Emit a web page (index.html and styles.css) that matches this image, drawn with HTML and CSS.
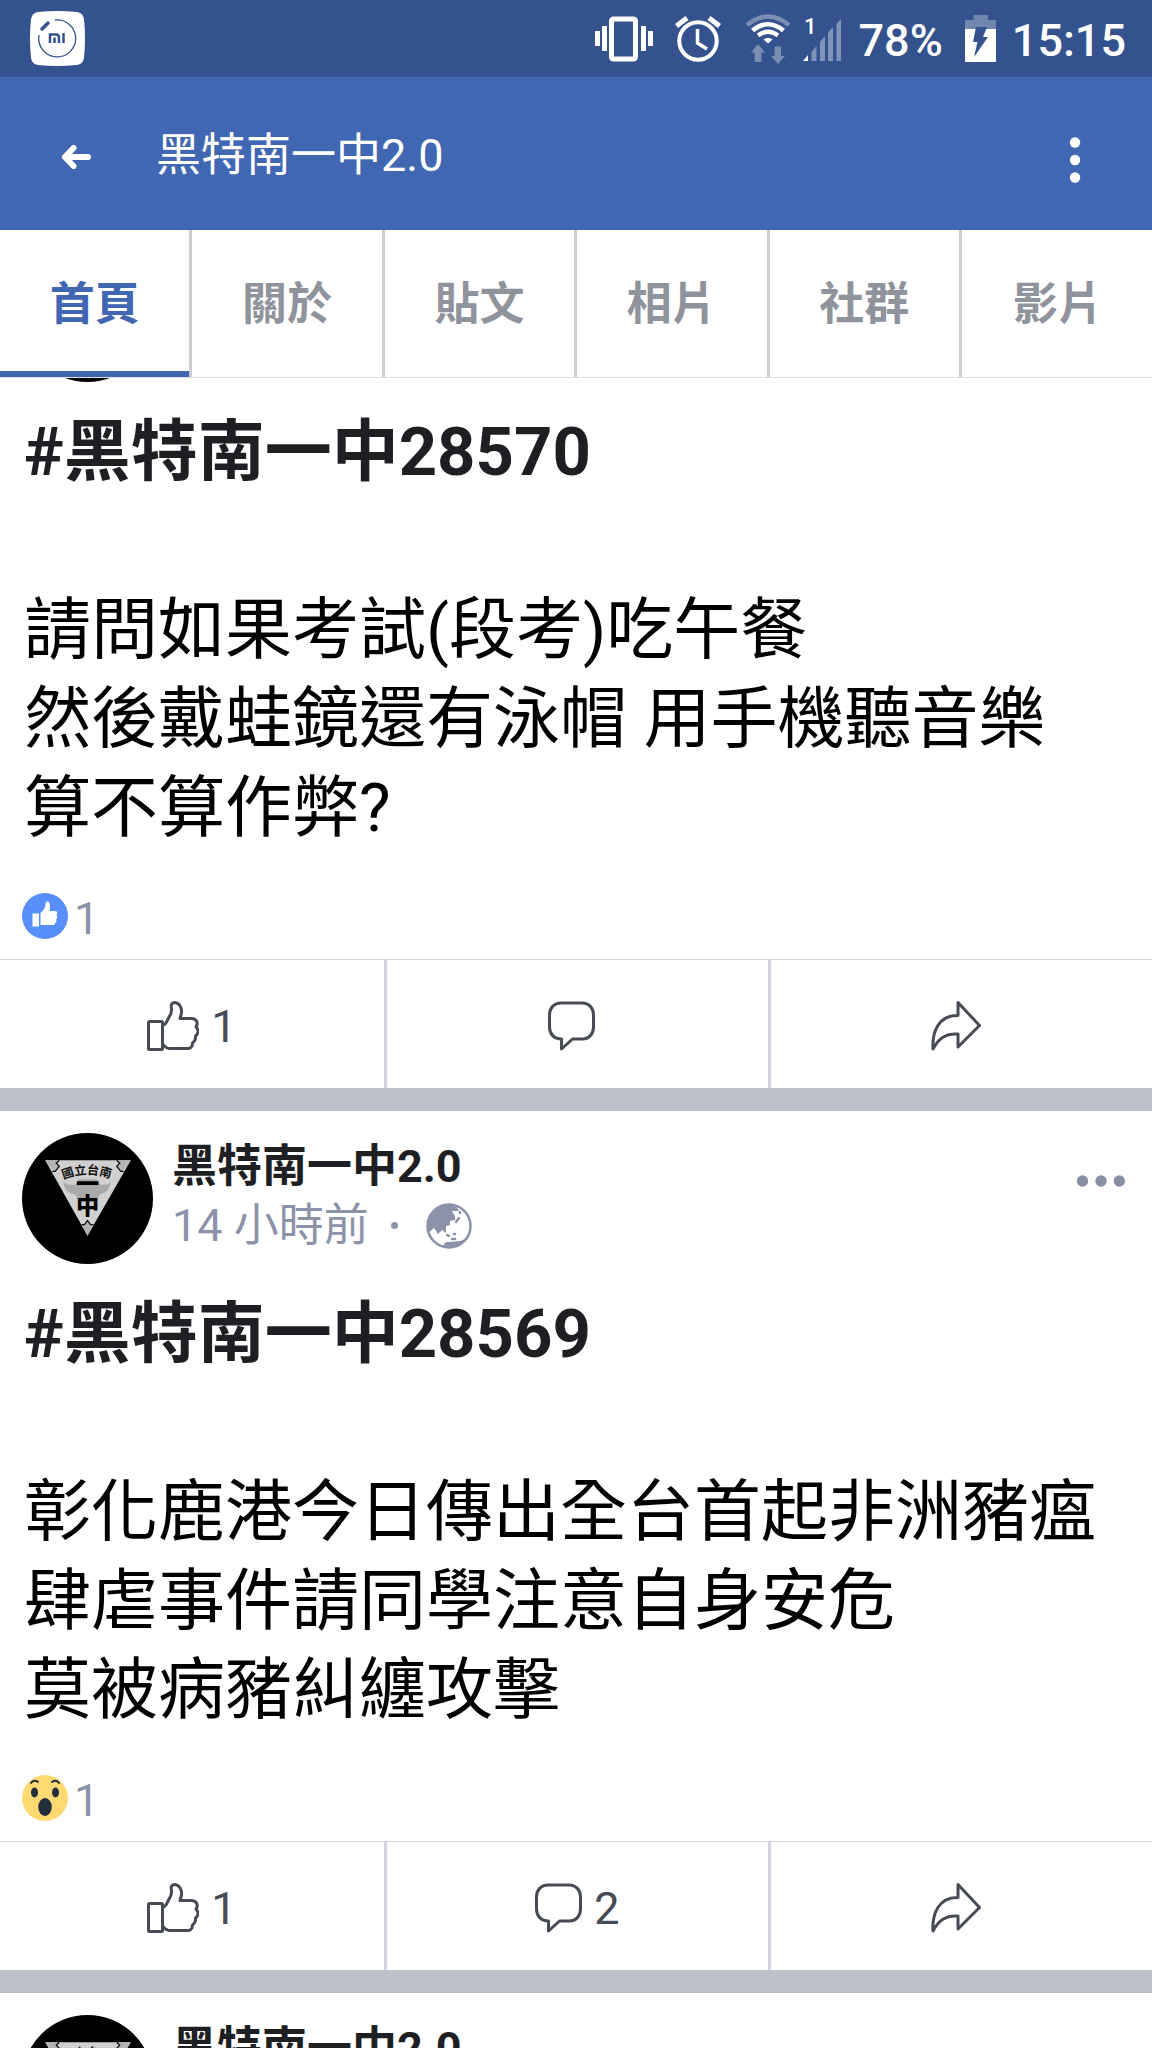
FILE: index.html
```html
<!DOCTYPE html>
<html lang="zh-Hant">
<head>
<meta charset="utf-8">
<meta name="viewport" content="width=device-width, initial-scale=1">
<title>黑特南一中2.0</title>
<link rel="stylesheet" href="styles.css">
</head>
<body>

<!-- Shared icons -->
<svg class="sprite" aria-hidden="true">
  <symbol id="icon-like" viewBox="0 0 52 50">
    <g fill="none" stroke="currentColor" stroke-width="3" stroke-linejoin="round" stroke-linecap="round">
      <rect x="1.5" y="20.500" width="14" height="28" rx="1"/>
      <path d="M16 24C19 24 20 20 21.500 17C24 13 25 12 24.500 8C23.500 3 25 1.500 28 1.500C33 2 35 8 34.500 12L33 17.500H44C50 17.500 51.500 22 49 26C52 29 51.500 33 48.500 35C49 38 48 40 45.500 42C45.500 45 44 47.500 41 47.500H22C19 47.500 18 46 16 43.500"/>
    </g>
  </symbol>
  <symbol id="icon-comment" viewBox="0 0 47 50">
    <path d="M13 2H34C41 2 45.500 7 45.500 14V26C45.500 33 41 38 34 38H24.500L13.500 48V38C6 38 1.500 33 1.500 26V14C1.500 7 6 2 13 2Z" fill="none" stroke="currentColor" stroke-width="3" stroke-linejoin="round"/>
  </symbol>
  <symbol id="icon-share" viewBox="0 0 50 50">
    <path d="M27 1.500L48.500 24.500L27 46V33C15 32 8 37 2 48C1 32 7 14 27 14.500Z" fill="none" stroke="currentColor" stroke-width="3" stroke-linejoin="round"/>
  </symbol>
  <symbol id="icon-more" viewBox="0 0 48 12">
    <circle cx="5.500" cy="6" r="5.700"/><circle cx="24" cy="6" r="5.700"/><circle cx="42.300" cy="6" r="5.700"/>
  </symbol>
  <symbol id="icon-globe" viewBox="0 0 46 46">
    <circle cx="23" cy="23" r="21.500" fill="none" stroke="currentColor" stroke-width="2.500"/>
    <path fill="currentColor" d="M3 29C-1 10 12 1 23 1C28 1 31 3 33 8L26 8C27 11 30 12 29 17L24 18L24 22L20 23L20 30L16 27L12 31L8 25Z"/>
    <path fill="currentColor" d="M6 36C10 42 14 44 18 42C18 37 27 40 31 38C36 39 36 36 41 36C36 43 29 45 23 45C15 45 9 41 6 36Z"/>
    <path stroke="currentColor" stroke-width="2.500" stroke-linecap="round" fill="none" d="M30 19L33 15M34 9V10M21 32L23 33M28 31H29M26 36H29"/>
  </symbol>
  <symbol id="icon-crest" viewBox="0 0 130 130">
    <circle cx="65" cy="65" r="65" fill="#000"/>
    <path d="M23 27H108L65 102Z" fill="#d0d0d0"/>
    <path d="M23 27H37L34 30L37 33L33 39L30 37Z M108 27H94L97 30L94 33L98 39L101 37Z M59 91L62 91L65 87L68 91L71 91L65 102Z" fill="#b4b4b4"/>
    <path d="M37 27L34 30L37 33L33 38H30M94 27L97 30L94 33L98 38H101M59 91H62L65 87L68 91H71" fill="none" stroke="#111" stroke-width="1.300"/>
    <path d="M41 48C44 53 49 51 54 51L56 46H74L77 51C82 51 86 53 88 48C87 59 80 60 77 61L74 68H56L53 61C47 60 42 58 41 48Z" fill="#a9a9a9"/>
  </symbol>
  <path id="crest-arc" d="M41 46Q65 36 90 46" fill="none"/>
</svg>

<div class="app">
  <div class="status">
    <svg class="status-app" viewBox="0 0 55 55" aria-label="Mi">
      <path d="M8 1Q27 -1 47 1Q53 2 54 8Q56 27 54 47Q53 53 47 54Q27 56 8 54Q2 53 1 47Q-1 27 1 8Q2 2 8 1Z" fill="#fff"/>
      <path d="M25 9A18.500 18.500 0 1 1 9 24" fill="none" stroke="#34528d" stroke-width="1.300"/>
      <path d="M12 18L18 12" stroke="#34528d" stroke-width="3.500" stroke-linecap="round"/>
      <path d="M20 32V23.500H26Q29 23.500 29 26.500V32M24.500 26.500V32M33.500 22V32" fill="none" stroke="#34528d" stroke-width="2.500"/>
    </svg>
    <div class="status-icons">
      <svg class="i-vibrate" viewBox="0 0 58 48" fill="#fff">
        <path d="M0 16H5V31H0ZM7 11H12V36H7ZM46 11H51V36H46ZM53 16H58V31H53Z"/>
        <rect x="16.500" y="4" width="24" height="40" rx="2" fill="none" stroke="#fff" stroke-width="5"/>
      </svg>
      <svg class="i-alarm" viewBox="0 0 46 48" fill="none" stroke="#fff" stroke-width="4">
        <circle cx="23" cy="26" r="18.700"/>
        <path d="M1.500 11L12 3M34 3L44.500 11" stroke-width="5"/>
        <path d="M22.500 14V28L32 34" stroke-width="3.500"/>
      </svg>
      <svg class="i-wifi" viewBox="0 0 46 50" fill="none" stroke="#fff" stroke-width="4.500">
        <path d="M2 11Q23 -6 44 11" opacity=".35"/>
        <path d="M7.500 16.500Q23 4 38.500 16.500M13 21.500Q23 14 33 21.500"/>
        <path d="M23 29.500L18.500 25.500Q23 22 27.500 25.500Z" fill="#fff" stroke="none"/>
        <path d="M13 30L20 38.500H16.500V48H9.500V38.500H6ZM33 50L26 42H29.500V32.500H36V42H40Z" fill="#fff" stroke="none" opacity=".35"/>
      </svg>
      <svg class="i-signal" viewBox="0 0 38 48" fill="#fff">
        <path d="M0 46L5 40V46Z"/>
        <path d="M8.500 37L13.500 31V46H8.500ZM17 27L22 21V46H17ZM25 17.500L30 12V46H25ZM33.500 9L38 4V46H33.500Z" opacity=".38"/>
        <text class="sim" x="1" y="19">1</text>
      </svg>
      <span class="status-text">78%</span>
      <svg class="i-battery" viewBox="0 0 31 47" fill="#fff">
        <path d="M8.500 0H23V5H31V14H0V5H8.500Z" opacity=".3"/>
        <path d="M0 14H31V47H0Z"/>
        <path d="M11 12H22L18 22H23L9 42L12.500 27H8Z" fill="#34528d"/>
      </svg>
      <time class="status-text">15:15</time>
    </div>
  </div>

  <header class="bar">
    <button class="icon-button" aria-label="返回">
      <svg class="i-back" viewBox="0 0 30 24" fill="none" stroke="#fff" stroke-width="6" stroke-linecap="round" stroke-linejoin="round"><path d="M27 12H4M12.500 3L4 12L12.500 21"/></svg>
    </button>
    <h1 class="bar-title">黑特南一中2.0</h1>
    <button class="icon-button" aria-label="更多選項">
      <svg class="i-menu" viewBox="0 0 12 46" fill="#fff"><circle cx="6" cy="5.500" r="5.200"/><circle cx="6" cy="23" r="5.200"/><circle cx="6" cy="40.500" r="5.200"/></svg>
    </button>
  </header>

  <nav class="tabs">
    <a class="tab tab-active" href="#home">首頁</a>
    <a class="tab" href="#about">關於</a>
    <a class="tab" href="#posts">貼文</a>
    <a class="tab" href="#photos">相片</a>
    <a class="tab" href="#community">社群</a>
    <a class="tab" href="#videos">影片</a>
  </nav>

  <main class="feed">
    <article class="post">
      <div class="post-head">
        <svg class="avatar"><use href="#icon-crest"/></svg>
      </div>
      <div class="post-body">
        <h2 class="post-tag">#黑特南一中28570</h2>
        <p class="post-text">請問如果考試(段考)吃午餐<br>然後戴蛙鏡還有泳帽 用手機聽音樂<br>算不算作弊?</p>
      </div>
      <div class="reactions">
        <svg class="reaction" viewBox="0 0 46 46"><circle cx="23" cy="23" r="23" fill="#588ffc"/><path fill="#fff" d="M10.500 20.500H17V33.500H10.500ZM18.500 20C21 18 23 15 23.500 12C23 9 24.500 8 26 8.500C29 10 28 15 27.500 18H33C36 18 35.500 21 34.500 22C36 24 35 26 34 26.500C35 28 34 29.500 33 30C33.500 31.500 32.500 32 31 32H19Q18.500 32 18.500 31Z"/></svg>
        <span class="reaction-count">1</span>
      </div>
      <div class="actions">
        <button class="action" aria-label="讚"><svg class="i-like"><use href="#icon-like"/></svg>1</button>
        <button class="action" aria-label="留言"><svg class="i-comment"><use href="#icon-comment"/></svg></button>
        <button class="action" aria-label="分享"><svg class="i-share"><use href="#icon-share"/></svg></button>
      </div>
    </article>

    <article class="post">
      <div class="post-head">
        <svg class="avatar" viewBox="0 0 130 130">
          <use href="#icon-crest"/>
          <text class="crest-small"><textPath href="#crest-arc">國立台南</textPath></text>
          <text class="crest-large" x="65" y="59">一</text>
          <text class="crest-large" x="65" y="80">中</text>
        </svg>
        <div class="byline">
          <a class="author" href="#home">黑特南一中2.0</a>
          <div class="meta"><span>14 小時前</span><span class="dot"></span><svg class="i-globe"><use href="#icon-globe"/></svg></div>
        </div>
        <button class="more" aria-label="更多"><svg class="i-more"><use href="#icon-more"/></svg></button>
      </div>
      <div class="post-body">
        <h2 class="post-tag">#黑特南一中28569</h2>
        <p class="post-text">彰化鹿港今日傳出全台首起非洲豬瘟<br>肆虐事件請同學注意自身安危<br>莫被病豬糾纏攻擊</p>
      </div>
      <div class="reactions">
        <svg class="reaction" viewBox="0 0 46 46"><circle cx="23" cy="23" r="23" fill="#ffd972"/><g fill="#232e3c"><ellipse cx="12.500" cy="17.500" rx="3.500" ry="5"/><ellipse cx="33.500" cy="17.500" rx="3.500" ry="5"/><ellipse cx="23" cy="32" rx="6.800" ry="9"/></g><path d="M9 8Q12 4 16 7M30 7Q34 4 37 8" fill="none" stroke="#232e3c" stroke-width="2" stroke-linecap="round"/></svg>
        <span class="reaction-count">1</span>
      </div>
      <div class="actions">
        <button class="action" aria-label="讚"><svg class="i-like"><use href="#icon-like"/></svg>1</button>
        <button class="action" aria-label="留言"><svg class="i-comment"><use href="#icon-comment"/></svg>2</button>
        <button class="action" aria-label="分享"><svg class="i-share"><use href="#icon-share"/></svg></button>
      </div>
    </article>

    <article class="post">
      <div class="post-head">
        <svg class="avatar" viewBox="0 0 130 130">
          <use href="#icon-crest"/>
          <text class="crest-small"><textPath href="#crest-arc">國立台南</textPath></text>
        </svg>
        <div class="byline">
          <a class="author" href="#home">黑特南一中2.0</a>
        </div>
      </div>
    </article>
  </main>
</div>
</body>
</html>
```
FILE: styles.css
```css
* {
  box-sizing: border-box;
  margin: 0;
}

body {
  font-family: Roboto, "Noto Sans CJK TC", sans-serif;
  font-size: 45px;
  line-height: 59px;
  color: #1d1f23;
  background: #fff;
}

svg {
  display: block;
  flex: none;
}

button {
  padding: 0;
  border: 0;
  background: none;
  color: inherit;
  font: inherit;
}

a {
  color: inherit;
  text-decoration: none;
}

.sprite {
  position: absolute;
  width: 0;
  height: 0;
}

.app {
  display: flex;
  flex-direction: column;
  height: 100vh;
  overflow: hidden;
}

/* Status bar */
.status {
  display: flex;
  flex: none;
  align-items: center;
  justify-content: space-between;
  height: 77px;
  padding: 0 26px 0 30px;
  background: #34528d;
  color: #fff;
}

.status-app { width: 55px; height: 55px; }

.status-icons {
  display: flex;
  align-items: center;
}

.status-text {
  padding-top: 4px;
  font-weight: 500;
}

.sim { font-size: 22px; font-weight: 500; }

.i-vibrate { width: 58px; height: 48px; margin-right: 22px; }
.i-alarm { width: 46px; height: 48px; margin-right: 24px; }
.i-wifi { width: 46px; height: 50px; margin-right: 12px; }
.i-signal { width: 38px; height: 48px; margin-right: 18px; }
.i-battery { width: 31px; height: 47px; margin: 0 16px 0 22px; }

/* Title bar */
.bar {
  display: flex;
  flex: none;
  align-items: center;
  height: 153px;
  padding: 0 71px 0 61px;
  background: #4167b2;
  color: #fff;
}

.bar-title {
  flex: 1;
  margin-left: 65px;
  padding-top: 4px;
  font-size: 45px;
  font-weight: 400;
}

.i-back { width: 30px; height: 24px; }
.i-menu { width: 12px; height: 46px; margin-top: 6px; }
.icon-button { padding-top: 6px; }

/* Tabs */
.tabs {
  display: flex;
  flex: none;
  position: relative;
  z-index: 1;
  height: 148px;
  overflow: hidden;
  border-bottom: 1px solid #dddfe2;
  background: #fff;
}

.tab {
  display: flex;
  flex: 0 0 16.7%;
  align-items: center;
  justify-content: center;
  padding-top: 2px;
  border-right: 3px solid #cbccd2;
  color: #8f939c;
  font-weight: 700;
}

.tab:last-child { border-right: 0; }

.tab-active {
  color: #4167b2;
  box-shadow: inset 0 -6px #4167b2;
}

/* Feed: scrolled so the first post's header sits under the tabs */
.feed {
  flex: 1;
  min-height: 0;
  margin-top: -149px;
  overflow: hidden;
}

.post {
  padding-top: 22px;
  border-bottom: 23px solid #bdc1c9;
}

.post-head {
  display: flex;
  gap: 19px;
  height: 131px;
  padding: 0 27px 0 22px;
}

.avatar { width: 131px; height: 131px; }

.crest-small {
  font: 700 12px "Noto Sans CJK TC", sans-serif;
  fill: #111;
}

.crest-large {
  font: 900 23px "Noto Sans CJK TC", sans-serif;
  fill: #000;
  text-anchor: middle;
}

.byline {
  flex: 1;
  padding-top: 4px;
}

.author {
  display: block;
  font-weight: 700;
}

.meta {
  display: flex;
  align-items: center;
  color: #8c93a9;
}

.dot {
  width: 7px;
  height: 7px;
  margin: 0 28px 0 22px;
  border-radius: 50%;
  background: currentColor;
}

.i-globe { width: 46px; height: 46px; }

.more {
  align-self: flex-start;
  padding-top: 42px;
  fill: #888ea4;
}

.i-more { width: 48px; height: 12px; }

.post-body {
  padding: 26px 24px 0;
  font-size: 67px;
  line-height: 89px;
}

.post-tag {
  margin-bottom: 89px;
  font-size: 67px;
  font-weight: 700;
}

.post-text { color: #000; }

.reactions {
  display: flex;
  align-items: center;
  gap: 6px;
  padding: 30px 22px 11px;
  color: #8a92a8;
}

.reaction { width: 46px; height: 46px; }
.reaction-count { padding-top: 6px; }

.actions {
  display: grid;
  grid-template-columns: repeat(3, 1fr);
  height: 129px;
  border-top: 1px solid #d0d4de;
}

.action {
  display: flex;
  align-items: center;
  justify-content: center;
  padding-top: 4px;
  color: #464b54;
}

.action + .action { border-left: 3px solid #d0d4de; }

.action svg { margin-right: 12px; }

.i-like { width: 52px; height: 50px; }
.i-comment { width: 47px; height: 50px; }
.i-share { width: 50px; height: 50px; }
```
